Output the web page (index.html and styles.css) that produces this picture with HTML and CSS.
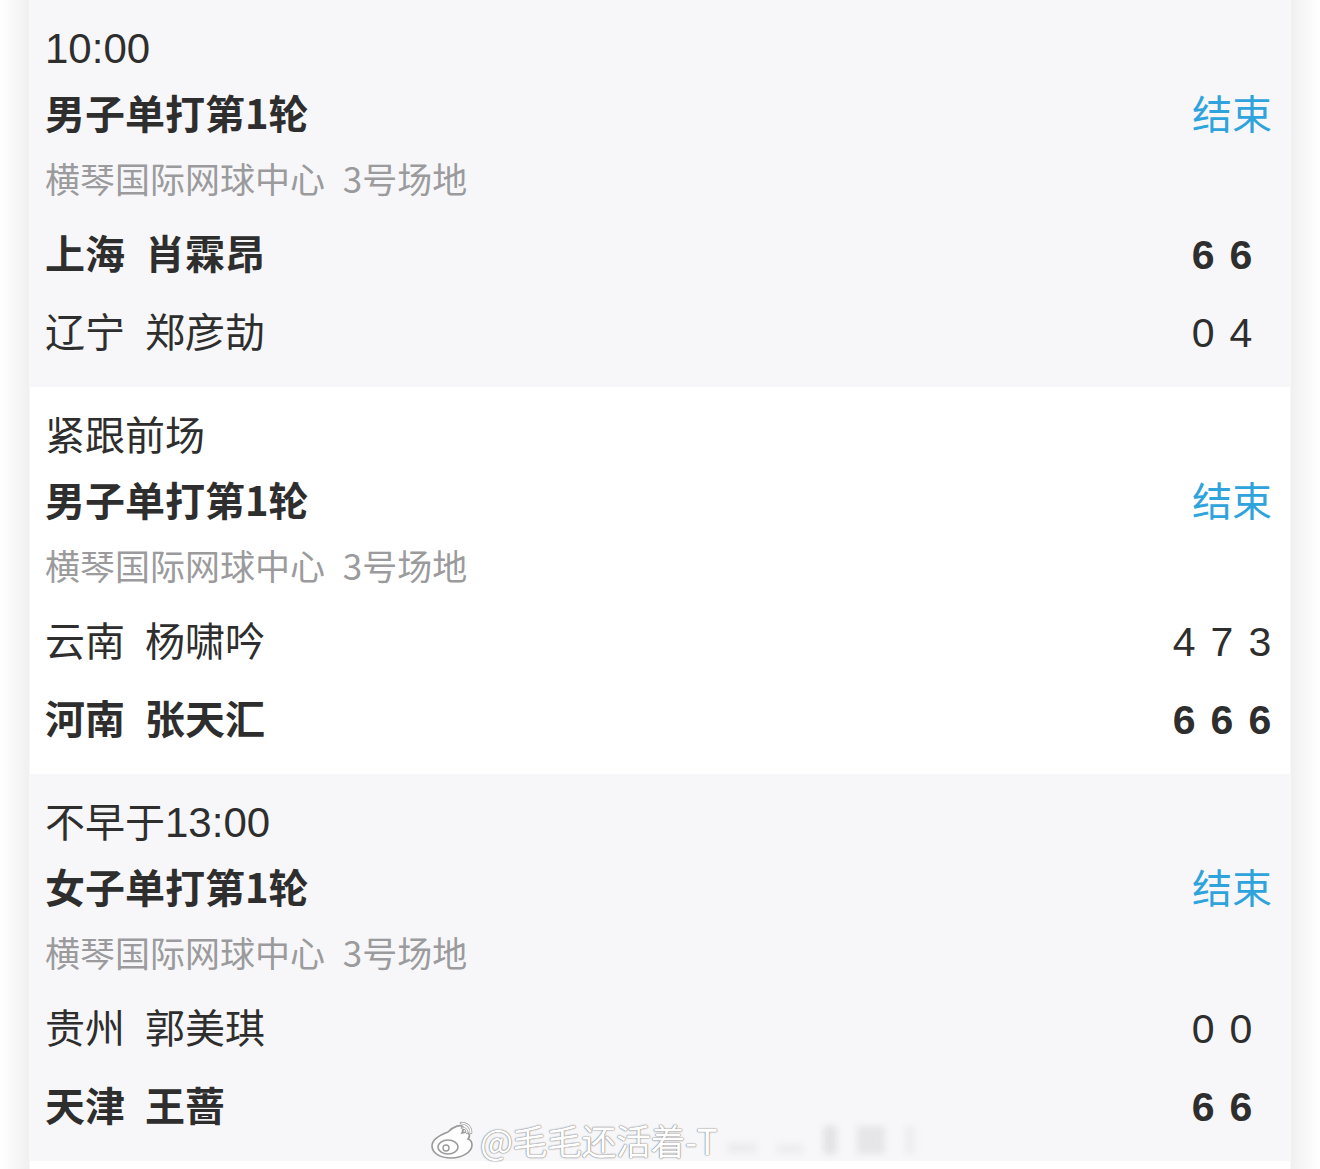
FILE: index.html
```html
<!DOCTYPE html>
<html lang="zh-CN">
<head>
<meta charset="utf-8">
<title>赛程</title>
<link rel="stylesheet" href="styles.css">
</head>
<body>
<div class="page">
  <div class="list">
    <section class="card card-gray">
      <div class="time"><span class="num">10:00</span></div>
      <div class="head"><span class="title">男子单打第1轮</span><span class="status">结束</span></div>
      <div class="venue">横琴国际网球中心 3号场地</div>
      <div class="row win"><span class="name">上海 肖霖昂</span><span class="scores"><span>6</span><span>6</span></span></div>
      <div class="row"><span class="name">辽宁 郑彦劼</span><span class="scores"><span>0</span><span>4</span></span></div>
    </section>
    <section class="card card-white">
      <div class="time">紧跟前场</div>
      <div class="head"><span class="title">男子单打第1轮</span><span class="status">结束</span></div>
      <div class="venue">横琴国际网球中心 3号场地</div>
      <div class="row"><span class="name">云南 杨啸吟</span><span class="scores"><span>4</span><span>7</span><span>3</span></span></div>
      <div class="row win"><span class="name">河南 张天汇</span><span class="scores"><span>6</span><span>6</span><span>6</span></span></div>
    </section>
    <section class="card card-gray">
      <div class="time">不早于<span class="num">13:00</span></div>
      <div class="head"><span class="title">女子单打第1轮</span><span class="status">结束</span></div>
      <div class="venue">横琴国际网球中心 3号场地</div>
      <div class="row"><span class="name">贵州 郭美琪</span><span class="scores"><span>0</span><span>0</span></span></div>
      <div class="row win"><span class="name">天津 王蔷</span><span class="scores"><span>6</span><span>6</span></span></div>
    </section>
  </div>
  <div class="watermark">
    <svg class="wb-logo" width="48" height="42" viewBox="0 0 48 42">
      <path d="M20 13c6-6 13-8 15-5 1 2 0 4-1 6 3-1 6-1 7 1 1 2 0 4-1 5 3 1 4 3 4 6 0 7-10 13-21 13C12 39 4 34 4 27c0-5 5-10 16-14z" fill="#fff" stroke="#9a9a9a" stroke-width="1.6"/>
      <ellipse cx="20" cy="28" rx="10" ry="7" fill="#fff" stroke="#9a9a9a" stroke-width="1.5"/>
      <circle cx="18" cy="29" r="3" fill="#fff" stroke="#9a9a9a" stroke-width="1.4"/>
      <path d="M33 4c6 0 10 4 10 10" fill="none" stroke="#9a9a9a" stroke-width="2.6" stroke-linecap="round"/>
      <path d="M33 4c6 0 10 4 10 10" fill="none" stroke="#fff" stroke-width="1.2" stroke-linecap="round"/>
      <path d="M34 9c3 0 5 2 5 5" fill="none" stroke="#9a9a9a" stroke-width="2.6" stroke-linecap="round"/>
      <path d="M34 9c3 0 5 2 5 5" fill="none" stroke="#fff" stroke-width="1.2" stroke-linecap="round"/>
    </svg>
    <span class="wb-text">@毛毛还活着-T</span>
    <span class="wb-blur"><i class="b1"></i><i class="b2"></i><i class="b3"></i><i class="b4"></i><i class="b5"></i></span>
  </div>
</div>
</body>
</html>
```

FILE: styles.css
```css
* { box-sizing: border-box; }
html, body { margin: 0; padding: 0; }
body {
  width: 1320px;
  height: 1169px;
  overflow: hidden;
  background: linear-gradient(to right, #ffffff 0px, #f0f0f0 29px, #ffffff 30px, #ffffff 1290px, #f0f0f0 1291px, #ffffff 1320px);
  font-family: "Noto Sans CJK SC", "Noto Sans", sans-serif;
  color: #2e2e2e;
}
.page {
  position: relative;
  width: 1320px;
  height: 1169px;
  padding: 0 30px;
}
.list {
  display: flex;
  flex-direction: column;
}
.card {
  height: 387px;
  padding: 13px 18px 0 15px;
  overflow: hidden;
}
.card-gray { background: #f7f7f9; }
.card-white { background: #ffffff; }
.time {
  font-size: 40px;
  line-height: 66px;
  height: 66px;
  white-space: nowrap;
}
.num {
  font-family: "Liberation Sans", "Noto Sans CJK SC", sans-serif;
  font-size: 42px;
}
.head {
  display: flex;
  justify-content: space-between;
  align-items: center;
  height: 66px;
  line-height: 66px;
}
.title {
  font-size: 40px;
  font-weight: 700;
}
.status {
  font-size: 40px;
  color: #2ea3dc;
}
.venue {
  font-size: 35px;
  line-height: 66px;
  height: 68px;
  color: #9b9b9d;
  white-space: nowrap;
  word-spacing: 10px;
}
.row {
  display: flex;
  justify-content: space-between;
  align-items: center;
  height: 78px;
  font-size: 40px;
}
.row.win { font-weight: 700; }
.name { white-space: nowrap; word-spacing: 11px; }
.scores {
  width: 100px;
  display: flex;
  justify-content: center;
  gap: 15px;
  padding-top: 7px;
  font-family: "Liberation Sans", "Noto Sans CJK SC", sans-serif;
  font-size: 41px;
}
.watermark {
  position: absolute;
  left: 428px;
  top: 1114px;
  display: flex;
  align-items: center;
  gap: 4px;
}
.wb-text {
  font-size: 35px;
  color: #ffffff;
  letter-spacing: -0.5px;
  text-shadow: 0 0 1px #8c8c8c, 0 0 1px #8c8c8c, 0 0 2px #9a9a9a;
  white-space: nowrap;
}
.wb-blur {
  display: flex;
  align-items: center;
  gap: 20px;
  margin-left: 6px;
  filter: blur(3px);
}
.wb-blur i {
  display: block;
  background: #ececee;
  height: 28px;
}
.wb-blur .b1 { width: 30px; height: 10px; margin-top: 16px; }
.wb-blur .b2 { width: 26px; height: 8px; margin-top: 18px; }
.wb-blur .b3 { width: 14px; background: #e4e4e6; }
.wb-blur .b4 { width: 28px; background: #e6e6e8; }
.wb-blur .b5 { width: 10px; background: #eeeeef; }
```
